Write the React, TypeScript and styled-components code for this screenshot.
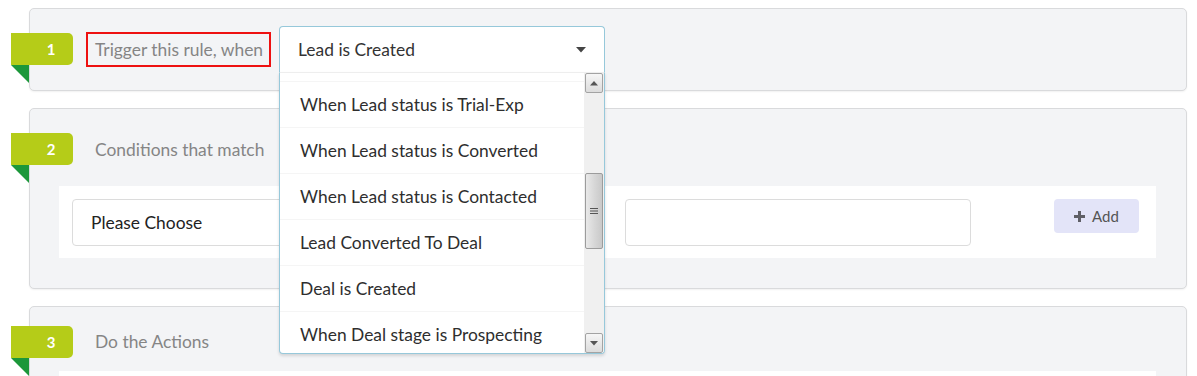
import React from 'react';
import styled, { createGlobalStyle } from 'styled-components';

const GlobalStyle = createGlobalStyle`
  body {
    margin: 0;
    background: #ffffff;
    font-family: Lato, "Open Sans", "Liberation Sans", sans-serif;
  }
`;

const Page = styled.div`
  padding: 8px 10px 0 29px;
  height: 376px;
  box-sizing: border-box;
  overflow: hidden;
`;

const Panel = styled.section<{ $bottom: number }>`
  background: #f3f4f6;
  border: 1px solid #d9dadc;
  border-radius: 5px;
  box-shadow: 0 1px 2px rgba(0, 0, 0, 0.06);
  padding: 17px 0 ${(p) => p.$bottom}px;
  margin-bottom: 17px;
`;

const Header = styled.div<{ $tall?: boolean }>`
  display: flex;
  align-items: center;
  min-height: ${(p) => (p.$tall ? '46px' : '32px')};
`;

const Badge = styled.div`
  position: relative;
  margin-left: -19px;
  width: 62px;
  height: 32px;
  box-sizing: border-box;
  padding-left: 18px;
  background: #b5cc18;
  border-radius: 0 5px 5px 0;
  color: #ffffff;
  font-weight: 700;
  font-size: 15px;
  line-height: 32px;
  text-align: center;

  &::after {
    content: '';
    position: absolute;
    top: 100%;
    left: 0;
    width: 0;
    height: 0;
    border-top: 18px solid #1c973a;
    border-left: 18px solid transparent;
  }
`;

const Label = styled.div<{ $marked?: boolean }>`
  margin-left: 13px;
  padding: 0 6px 0 7px;
  height: 35px;
  box-sizing: border-box;
  border: 2px solid ${(p) => (p.$marked ? '#ee1111' : 'transparent')};
  color: #858585;
  font-size: 17.4px;
  line-height: 31px;
  white-space: nowrap;
`;

const Dropdown = styled.div`
  position: relative;
  margin-left: 8px;
  width: 326px;
  height: 46px;
  z-index: 5;
`;

const Trigger = styled.div`
  height: 46px;
  box-sizing: border-box;
  display: flex;
  align-items: center;
  justify-content: space-between;
  padding: 0 18px 0 18px;
  background: #ffffff;
  border: 1px solid #96c8da;
  border-bottom: none;
  border-radius: 4px 4px 0 0;
  color: #333333;
  font-size: 17.4px;
`;

const Menu = styled.div`
  position: absolute;
  top: 100%;
  left: 0;
  right: 0;
  height: 282px;
  box-sizing: border-box;
  display: flex;
  background: #ffffff;
  border: 1px solid #96c8da;
  border-top: 1px solid #eeeeee;
  border-radius: 0 0 4px 4px;
  box-shadow: 0 2px 3px rgba(34, 36, 38, 0.15);
  overflow: hidden;
`;

const Viewport = styled.div`
  flex: 1;
  overflow: hidden;
`;

const ItemList = styled.ul<{ $offset: number }>`
  list-style: none;
  margin: ${(p) => -p.$offset}px 0 0;
  padding: 0;
`;

const Item = styled.li`
  height: 46px;
  box-sizing: border-box;
  padding: 0 20px;
  border-top: 1px solid #f5f5f5;
  color: #2e2e2e;
  font-size: 17.4px;
  line-height: 45px;
  white-space: nowrap;

  &:first-child {
    border-top: none;
  }
`;

const Scrollbar = styled.div`
  width: 20px;
  background: #f0f0f0;
  display: flex;
  flex-direction: column;
  align-items: center;
`;

const ScrollButton = styled.div`
  width: 18px;
  height: 20px;
  box-sizing: border-box;
  border: 1px solid #a3a3a3;
  border-radius: 2px;
  background: linear-gradient(#f6f6f6, #dcdcdc);
  display: flex;
  align-items: center;
  justify-content: center;
`;

const Track = styled.div`
  flex: 1;
  width: 100%;
  display: flex;
  justify-content: center;
`;

const Thumb = styled.div<{ $top: number; $size: number }>`
  margin-top: ${(p) => p.$top}px;
  width: 18px;
  height: ${(p) => p.$size}px;
  box-sizing: border-box;
  border: 1px solid #9c9c9c;
  border-radius: 2px;
  background: linear-gradient(90deg, #e9e9e9, #d6d6d6 55%, #c9c9c9);
  display: flex;
  align-items: center;
  justify-content: center;
`;

const Inner = styled.div<{ $top: number }>`
  margin: ${(p) => p.$top}px 30px 0 29px;
  background: #ffffff;
  height: 72px;
  box-sizing: border-box;
  padding: 13px 17px 0 13px;
  display: flex;
  align-items: flex-start;
`;

const Field = styled.div<{ $width: number }>`
  width: ${(p) => p.$width}px;
  height: 47px;
  box-sizing: border-box;
  border: 1px solid #dcdcdc;
  border-radius: 4px;
  background: #ffffff;
  padding: 0 18px;
  color: #222222;
  font-size: 17.4px;
  line-height: 45px;
  margin-right: 25px;
`;

const Spacer = styled.div`
  flex: 1;
`;

const AddButton = styled.button`
  width: 85px;
  height: 34px;
  border: none;
  border-radius: 4px;
  background: #e3e4f8;
  color: #555555;
  font-family: inherit;
  font-size: 15px;
  font-weight: 400;
  display: flex;
  align-items: center;
  justify-content: center;
  gap: 7px;
  padding: 0;
  cursor: pointer;
`;

const Caret = () => (
  <svg width="10" height="6" viewBox="0 0 10 6">
    <path d="M0 0h10L5 5.5z" fill="#444" />
  </svg>
);

const Arrow = ({ down }: { down?: boolean }) => (
  <svg width="8" height="5" viewBox="0 0 8 5">
    <path d={down ? 'M0 0h8L4 4.5z' : 'M0 4.5h8L4 0z'} fill="#555" />
  </svg>
);

const Grip = () => (
  <svg width="8" height="8" viewBox="0 0 8 8">
    <path d="M0 1.5h8M0 4h8M0 6.5h8" stroke="#555" strokeWidth="1" />
  </svg>
);

const Plus = () => (
  <svg width="11" height="11" viewBox="0 0 11 11">
    <path d="M4 0h3v4h4v3H7v4H4V7H0V4h4z" fill="#5f5f66" />
  </svg>
);

const triggers = [
  'When Lead status is Junk Lead',
  'When Lead status is Trial-Exp',
  'When Lead status is Converted',
  'When Lead status is Contacted',
  'Lead Converted To Deal',
  'Deal is Created',
  'When Deal stage is Prospecting',
  'When Deal stage is Qualification',
];

export default function App() {
  return (
    <>
      <GlobalStyle />
      <Page>
        <Panel $bottom={18}>
          <Header $tall>
            <Badge>1</Badge>
            <Label $marked>Trigger this rule, when</Label>
            <Dropdown>
              <Trigger>
                <span>Lead is Created</span>
                <Caret />
              </Trigger>
              <Menu>
                <Viewport>
                  <ItemList $offset={38}>
                    {triggers.map((t, i) => (
                      <Item key={`trigger-${i}`}>{t}</Item>
                    ))}
                  </ItemList>
                </Viewport>
                <Scrollbar>
                  <ScrollButton>
                    <Arrow />
                  </ScrollButton>
                  <Track>
                    <Thumb $top={80} $size={76}>
                      <Grip />
                    </Thumb>
                  </Track>
                  <ScrollButton>
                    <Arrow down />
                  </ScrollButton>
                </Scrollbar>
              </Menu>
            </Dropdown>
          </Header>
        </Panel>

        <Panel $bottom={30}>
          <Header $tall>
            <Badge>2</Badge>
            <Label>Conditions that match</Label>
          </Header>
          <Inner $top={14}>
            <Field $width={528}>Please Choose</Field>
            <Field $width={346} />
            <Spacer />
            <AddButton>
              <Plus />
              Add
            </AddButton>
          </Inner>
        </Panel>

        <Panel $bottom={29}>
          <Header>
            <Badge>3</Badge>
            <Label>Do the Actions</Label>
          </Header>
          <Inner $top={12} />
        </Panel>
      </Page>
    </>
  );
}
